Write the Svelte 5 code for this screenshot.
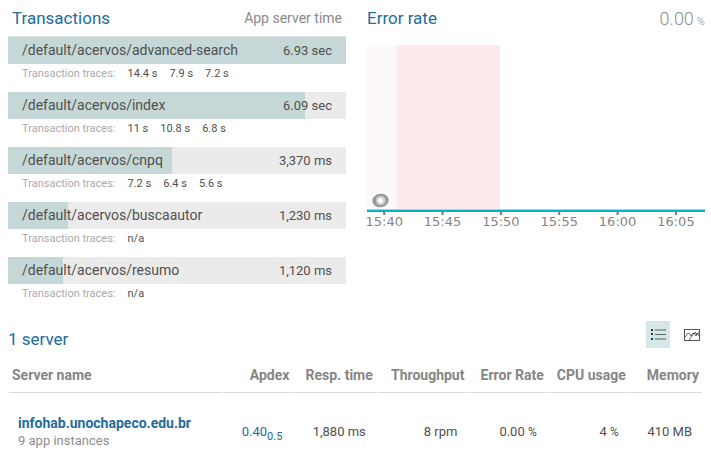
<script>
  const transactions = [
    { name: '/default/acervos/advanced-search', time: '6.93 sec', share: 100, traces: ['14.4 s', '7.9 s', '7.2 s'] },
    { name: '/default/acervos/index', time: '6.09 sec', share: 88, traces: ['11 s', '10.8 s', '6.8 s'] },
    { name: '/default/acervos/cnpq', time: '3,370 ms', share: 48.5, traces: ['7.2 s', '6.4 s', '5.6 s'] },
    { name: '/default/acervos/buscaautor', time: '1,230 ms', share: 17.8, traces: ['n/a'] },
    { name: '/default/acervos/resumo', time: '1,120 ms', share: 16.2, traces: ['n/a'] }
  ];
  const ticks = ['15:40', '15:45', '15:50', '15:55', '16:00', '16:05'];
  const tickAt = (i) => `${5.1 + i * 17.26}%`;
  let view = $state('list');
</script>

<main>
  <div class="panels">
    <section>
      <header class="head">
        <h2>Transactions</h2>
        <span class="note">App server time</span>
      </header>
      <ul class="transactions">
        {#each transactions as t}
          <li>
            <div class="bar">
              <span class="fill" style="width: {t.share}%"></span>
              <span class="name">{t.name}</span>
              <span class="time">{t.time}</span>
            </div>
            <div class="traces">
              <span class="label">Transaction traces:</span>
              {#each t.traces as trace}<span>{trace}</span>{/each}
            </div>
          </li>
        {/each}
      </ul>
    </section>

    <section>
      <header class="head error-head">
        <h2>Error rate</h2>
        <div class="rate"><span>0.00</span><small>%</small></div>
      </header>
      <svg class="chart" role="img" aria-label="Error rate over time">
        <rect x="0" y="0" width="8.9%" height="166" fill="#fdf9f9" />
        <rect x="8.9%" y="0" width="30.4%" height="166" fill="#fce9e9" />
        <rect x="0" y="164" width="100%" height="1" fill="#9edbe6" />
        <rect x="0" y="165" width="100%" height="2" fill="#06b1ce" />
        <ellipse cx="13.5" cy="155.5" rx="8.2" ry="6.7" fill="#999" transform="rotate(-8 13.5 155.5)" />
        <ellipse cx="13.7" cy="155.5" rx="4.8" ry="4.6" fill="#d2d2d2" />
        <circle cx="13.5" cy="155.5" r="2.4" fill="#fff" />
        {#each ticks as tick, i}
          <line x1={tickAt(i)} x2={tickAt(i)} y1="167" y2="170" stroke="#777" stroke-width="2" />
          <text x={tickAt(i)} y="181" text-anchor="middle">{tick}</text>
        {/each}
      </svg>
    </section>
  </div>

  <section class="servers">
    <header class="server-head">
      <h2>1 server</h2>
      <div class="views">
        <button class:active={view === 'list'} aria-label="List view" onclick={() => (view = 'list')}>
          <svg width="16" height="13" viewBox="0 0 16 13">
            <path d="M1 1h2v2H1zM1 5h2v2H1zM1 10h2v2H1z" fill="#333" />
            <path d="M5 2h11M5 11h11" stroke="#96a3a4" stroke-width="2" />
            <path d="M5 6.5h11" stroke="#596667" />
          </svg>
        </button>
        <button class:active={view === 'chart'} aria-label="Chart view" onclick={() => (view = 'chart')}>
          <svg width="16" height="12" viewBox="0 0 16 12" fill="none" stroke="#555">
            <rect x=".5" y=".5" width="15" height="11" />
            <path d="M1 8l3-4 2 1 1 2 2-3 1 1 1-2 2 3 2-3M5 11l3-4 2-3 2 3 1-3 2 3" stroke-width=".9" />
          </svg>
        </button>
      </div>
    </header>
    <table>
      <colgroup>
        <col style="width: 31.2%" />
        <col style="width: 9.9%" />
        <col style="width: 12%" />
        <col style="width: 13.2%" />
        <col style="width: 11.4%" />
        <col style="width: 11.8%" />
        <col style="width: 10.5%" />
      </colgroup>
      <thead>
        <tr>
          <th>Server name</th>
          <th>Apdex</th>
          <th>Resp. time</th>
          <th>Throughput</th>
          <th>Error Rate</th>
          <th>CPU usage</th>
          <th>Memory</th>
        </tr>
      </thead>
      <tbody>
        <tr>
          <td>
            <a class="host" href="#infohab">infohab.unochapeco.edu.br</a>
            <span class="instances">9 app instances</span>
          </td>
          <td class="apdex">0.40<sub>0.5</sub></td>
          <td>1,880 ms</td>
          <td>8 rpm</td>
          <td>0.00 <small>%</small></td>
          <td>4 <small>%</small></td>
          <td>410 MB</td>
        </tr>
      </tbody>
    </table>
  </section>
</main>

<style>
  :global(body) {
    margin: 0;
    background: #fff;
  }
  main {
    font-family: Roboto, 'Open Sans', sans-serif;
    font-size: 14px;
    color: #505050;
    padding: 0 6px 0 8px;
  }
  h2 {
    margin: 0;
    font-size: 17px;
    font-weight: 400;
    line-height: 24px;
    color: #236c9c;
  }
  .panels {
    display: grid;
    grid-template-columns: 1fr 1fr;
    gap: 21px;
  }
  .head {
    display: flex;
    justify-content: space-between;
    align-items: center;
    box-sizing: border-box;
    height: 37px;
    padding: 0 4px;
    border-bottom: 1px solid #e0e3e3;
  }
  .error-head {
    border-color: transparent;
    padding: 0;
  }
  .note {
    color: #8a8a8a;
  }
  .rate {
    display: flex;
    align-items: baseline;
    gap: 3px;
    font-size: 18px;
    font-weight: 300;
    color: #8e8e8e;
  }
  .rate small {
    font-size: 11px;
  }
  .transactions {
    list-style: none;
    margin: 0;
    padding: 0;
  }
  li {
    height: 55px;
  }
  .bar {
    position: relative;
    display: flex;
    justify-content: space-between;
    line-height: 27px;
    padding: 0 14px;
    background: #ebebeb;
  }
  .fill {
    position: absolute;
    inset: 0 auto 0 0;
    background: #c5d8d7;
  }
  .name,
  .time {
    position: relative;
  }
  .time {
    font-size: 13px;
  }
  .traces {
    display: flex;
    gap: 12px;
    padding: 0 14px;
    font-size: 11px;
    line-height: 20px;
  }
  .label {
    color: #aaa;
  }
  .chart {
    display: block;
    width: 100%;
    height: 190px;
    margin-top: 8px;
    overflow: visible;
  }
  .chart text {
    font: 13px 'DejaVu Sans', sans-serif;
    fill: #858585;
  }
  .servers {
    padding-right: 2px;
  }
  .server-head {
    display: flex;
    justify-content: space-between;
    align-items: center;
    height: 37px;
    margin-top: 8px;
  }
  .views {
    display: flex;
    gap: 10px;
    margin: 0 -1px 8px 0;
  }
  button {
    display: grid;
    place-items: center;
    width: 24px;
    height: 27px;
    padding: 0;
    border: 0;
    background: none;
  }
  button.active {
    background: #d5e7e8;
  }
  table {
    width: 100%;
    table-layout: fixed;
    border-collapse: separate;
    border-spacing: 1px 0;
  }
  th,
  td {
    text-align: right;
    white-space: nowrap;
  }
  th {
    height: 35px;
    padding: 0 3px;
    border-bottom: 1px solid #dcdcdc;
    color: #868686;
    font-weight: 700;
  }
  td {
    padding: 21px 10px 0;
    font-size: 13px;
    line-height: 18px;
  }
  th:first-child,
  td:first-child {
    text-align: left;
  }
  td:first-child {
    padding-left: 9px;
  }
  .host {
    display: block;
    color: #236c9c;
    font-size: 14px;
    font-weight: 700;
    text-decoration: none;
  }
  .instances {
    color: #8e8e8e;
  }
  .apdex {
    color: #236c9c;
  }
  sub {
    font-size: 11px;
    line-height: 0;
  }
  td small {
    font-size: 12px;
  }
</style>
